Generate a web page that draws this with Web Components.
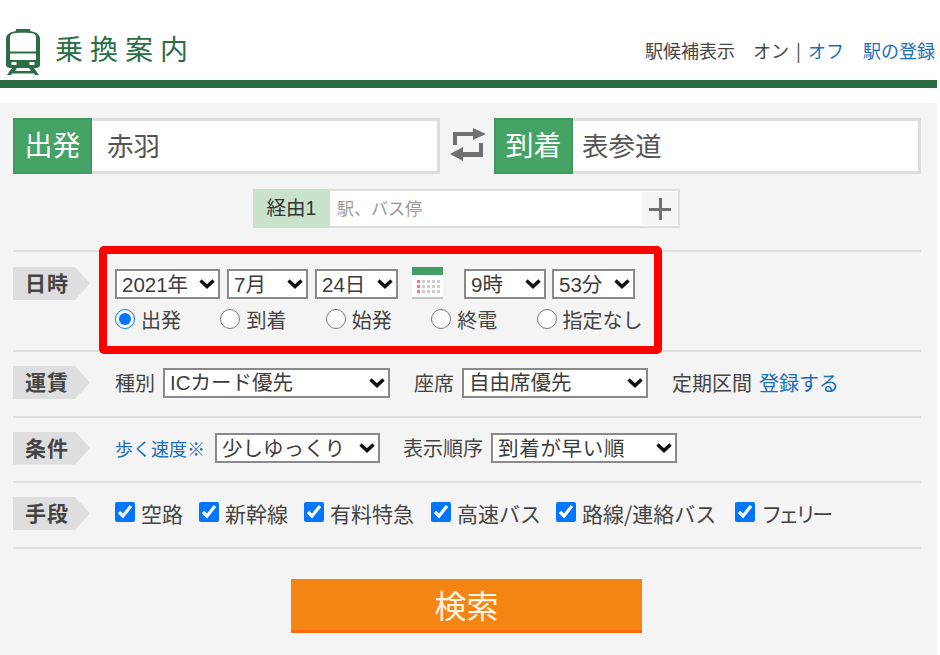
<!DOCTYPE html>
<html lang="ja">
<head>
<meta charset="utf-8">
<title>乗換案内</title>
<style>
  html, body { margin: 0; background: #fff; }
  body { font-family: "Noto Sans CJK JP", "Liberation Sans", sans-serif; color: #333; overflow: hidden; height: 655px; }
</style>
</head>
<body>
<app-header></app-header>
<search-panel>
  <div style="display:flex;align-items:center;height:56px">
    <station-field label="出発" value="赤羽" pad="15"></station-field>
    <swap-icon></swap-icon>
    <station-field label="到着" value="表参道" pad="9"></station-field>
  </div>
  <via-field></via-field>

  <form-row label="日時" first>
    <date-block></date-block>
  </form-row>

  <form-row label="運賃">
    <form-text gap="8">種別</form-text>
    <pick-select w="227" value="ICカード優先"></pick-select>
    <form-text left="24" gap="8">座席</form-text>
    <pick-select w="186" value="自由席優先"></pick-select>
    <form-text left="24" gap="7">定期区間</form-text>
    <form-text link>登録する</form-text>
  </form-row>

  <form-row label="条件">
    <form-text link gap="10" size="18">歩く速度※</form-text>
    <pick-select w="165" value="少しゆっくり"></pick-select>
    <form-text left="23" gap="8">表示順序</form-text>
    <pick-select w="186" value="到着が早い順" spacing="0.7"></pick-select>
  </form-row>

  <form-row label="手段" last>
    <check-item style="margin-right:16px">空路</check-item>
    <check-item style="margin-right:16px">新幹線</check-item>
    <check-item style="margin-right:17px">有料特急</check-item>
    <check-item style="margin-right:15px">高速バス</check-item>
    <check-item style="margin-right:19px">路線/連絡バス</check-item>
    <check-item style="letter-spacing:-4px">フェリー</check-item>
  </form-row>

  <search-button>検索</search-button>
</search-panel>

<script>
class AppHeader extends HTMLElement {
  constructor() {
    super()
    this.attachShadow({mode: 'open'})
    this.shadowRoot.innerHTML = `
      <style>
        :host { display: block; height: 103px; }
        .top { height: 80px; display: flex; align-items: flex-end; box-sizing: border-box; padding: 0 0 5px 5px; width: 940px; }
        svg { display: block; flex: none; }
        h1 { margin: 0 0 9px 14px; font-size: 28px; font-weight: 400; letter-spacing: 7px; color: #2c6e43; line-height: 36px; }
        .tools { margin-left: auto; margin-bottom: 12px; display: flex; font-size: 18px; line-height: 26px; white-space: nowrap; width: 295px; color: #444; }
        .tools span { display: block; }
        a { color: #1a6dbb; text-decoration: none; }
        .bar { height: 8px; width: 937px; background: #2c6b42; }
      </style>
      <div class="top">
        <svg width="36" height="46" viewBox="0 0 36 46">
          <path fill="#2c6e43" fill-rule="evenodd" d="M11 0h14v2c6 1 9 3 10 7v27c0 2-2 3-4 3H5c-2 0-4-1-4-3V9c1-4 4-6 10-7zM7.500 4.500C6 5 5 6.500 5 8v14.500h26V8c0-1.500-1-3-2.500-3.500-3-1-18-1-21 0zM5 24.500V31h26v-6.500zM6.500 33v3h5v-3zM24.500 33v3h5v-3z"/>
          <path fill="#2c6e43" d="M7 39h5l-2 3h16l-2-3h5l5 7h-4l-1-1.500H7L6 46H2z"/>
        </svg>
        <h1>乗換案内</h1>
        <div class="tools">
          <span style="width:108px">駅候補表示</span>
          <span style="width:43px">オン</span>
          <span style="width:12px">|</span>
          <a href="#" style="width:55px">オフ</a>
          <a href="#">駅の登録</a>
        </div>
      </div>
      <div class="bar"></div>`
  }
}

class SearchPanel extends HTMLElement {
  constructor() {
    super()
    this.attachShadow({mode: 'open'})
    this.shadowRoot.innerHTML = `
      <style>
        :host { display: block; width: 937px; height: 552px; box-sizing: border-box; background: #f4f4f4; padding: 15px 16px 0 13px; }
      </style>
      <slot></slot>`
  }
}

class StationField extends HTMLElement {
  constructor() {
    super()
    this.attachShadow({mode: 'open'})
    this.shadowRoot.innerHTML = `
      <style>
        :host { display: flex; width: 427px; height: 56px; box-sizing: border-box; border: 3px solid #ddd; background: #fff; }
        .lab { margin: -3px 0 -3px -3px; width: 79px; flex: none; box-sizing: border-box; border: 2px solid #3f9a5d; background: #44a365; color: #fff; font-size: 28px; text-align: center; line-height: 49px; white-space: nowrap; }
        .val { padding-left: ${this.getAttribute('pad')}px; font-size: 26.500px; line-height: 47px; color: #555; }
      </style>
      <div class="lab">${this.getAttribute('label')}</div>
      <div class="val">${this.getAttribute('value')}</div>`
  }
}

class SwapIcon extends HTMLElement {
  constructor() {
    super()
    this.attachShadow({mode: 'open'})
    this.shadowRoot.innerHTML = `
      <style>
        :host { display: block; width: 54px; flex: none; padding-left: 10px; box-sizing: border-box; margin-top: -3px; }
        svg { display: block; }
      </style>
      <svg width="36" height="33" viewBox="0 0 36 33">
        <path fill="#707070" d="M3 4H23V0L36 6 23 12V8H7v9H3z"/>
        <path fill="#707070" d="M33 15V29H13v4L0 26l13-7v5H29V15z"/>
      </svg>`
  }
}

class ViaField extends HTMLElement {
  constructor() {
    super()
    this.attachShadow({mode: 'open'})
    this.shadowRoot.innerHTML = `
      <style>
        :host { display: flex; width: 427px; height: 39px; margin: 15px 0 22px 240px; box-sizing: border-box; border: 2px solid #ddd; background: #fff; }
        .lab { margin: -2px 0 -2px -2px; width: 77px; flex: none; background: #c8e2cc; font-family: "Liberation Sans", "Noto Sans CJK JP", sans-serif; font-size: 19.500px; line-height: 38px; text-align: center; color: #333; }
        .hint { padding-left: 7px; font-size: 17px; line-height: 34px; color: #999; flex: 1; }
        .plus { width: 35px; background: #f4f4f4; margin: 1px; display: flex; align-items: center; justify-content: center; }
      </style>
      <div class="lab">経由1</div>
      <div class="hint">駅、バス停</div>
      <div class="plus">
        <svg width="22" height="22" viewBox="0 0 22 22"><path fill="#707070" d="M10 0h3v10h9v3h-9v9h-3v-9H0v-3h10z"/></svg>
      </div>`
  }
}

class FormRow extends HTMLElement {
  constructor() {
    super()
    this.attachShadow({mode: 'open'})
    this.shadowRoot.innerHTML = `
      <style>
        :host { display: flex; width: 908px; box-sizing: border-box; height: 65.500px; border-top: 2px solid #e0e0e0; padding-top: 14px; align-items: flex-start; }
        :host([first]) { height: 100px; padding-top: 15px; }
        :host([last]) { height: 67.500px; border-bottom: 2px solid #e0e0e0; }
        .lab { width: 77px; height: 33px; margin-right: 25px; flex: none; background: #dedede; color: #444; font-size: 21px; font-weight: 700; line-height: 31px; box-sizing: border-box; padding-left: 12px; letter-spacing: 1px;
          clip-path: polygon(0 0, 62px 0, 77px 50%, 62px 100%, 0 100%); }
        .body { display: flex; align-items: center; flex: 1; min-height: 33px; }
      </style>
      <div class="lab">${this.getAttribute('label')}</div>
      <div class="body"><slot></slot></div>`
  }
}

class FormText extends HTMLElement {
  connectedCallback() {
    if (this.shadowRoot) return
    this.attachShadow({mode: 'open'})
    const left = this.getAttribute('left') || 0
    const gap = this.getAttribute('gap') || 0
    const size = this.getAttribute('size') || 20
    const inner = this.hasAttribute('link') ? '<a href="#"><slot></slot></a>' : '<slot></slot>'
    this.shadowRoot.innerHTML = `
      <style>
        :host { display: block; margin-left: ${left}px; margin-right: ${gap}px; font-size: ${size}px; line-height: 30px; white-space: nowrap; color: #444; }
        a { color: #1a6dbb; text-decoration: none; }
      </style>
      ${inner}`
  }
}

class PickSelect extends HTMLElement {
  connectedCallback() {
    if (this.shadowRoot) return
    this.attachShadow({mode: 'open'})
    const value = this.getAttribute('value')
    const w = this.getAttribute('w')
    const spacing = this.getAttribute('spacing') || 0
    this.shadowRoot.innerHTML = `
      <style>
        :host { display: block; position: relative; width: ${w}px; height: 30px; flex: none; }
        select { appearance: none; display: block; width: 100%; height: 30px; margin: 0; box-sizing: border-box; border: 2px solid #8a8a8a; border-radius: 0; background: #fff; padding: 0 0 0 5px; font: 20.500px "Liberation Sans", "Noto Sans CJK JP", sans-serif; letter-spacing: ${spacing}px; color: #3c3c3c; outline: none; }
        svg { position: absolute; right: 5px; top: 10px; pointer-events: none; }
      </style>
      <select><option>${value}</option></select>
      <svg width="16" height="10" viewBox="0 0 16 10"><path fill="none" stroke="#111" stroke-width="3.500" d="M1.500 1.500l6.500 6 6.500-6"/></svg>`
  }
}

class DateBlock extends HTMLElement {
  constructor() {
    super()
    this.attachShadow({mode: 'open'})
    const radios = ['出発', '到着', '始発', '終電', '指定なし']
      .map((t, i) => `<label><input type="radio" name="kind" ${i == 0 ? 'checked' : ''}>${t}</label>`).join('')
    this.shadowRoot.innerHTML = `
      <style>
        :host { display: block; position: relative; margin-top: 2px; font-size: 20px; color: #444; }
        .dates { display: flex; align-items: flex-start; height: 35px; }
        .dates pick-select { margin-right: 7px; }
        .cal { margin: -2px 21px 0 7px; display: block; flex: none; }
        .radios { display: grid; grid-template-columns: repeat(4, 105.400px) auto; width: 530px; height: 30px; }
        label { display: flex; align-items: center; white-space: nowrap; line-height: 30px; padding-top: 1px; }
        input { width: 20px; height: 20px; margin: 0 6px 3px 0; flex: none; }
        .mark { position: absolute; left: -16px; top: -23px; width: 563px; height: 108px; box-sizing: border-box; border: 8px solid #f00; border-radius: 5px; pointer-events: none; }
      </style>
      <div class="dates">
        <pick-select w="105" value="2021年"></pick-select>
        <pick-select w="81" value="7月"></pick-select>
        <pick-select w="83" value="24日"></pick-select>
        <svg class="cal" width="31" height="32" viewBox="0 0 31 32">
          <rect x="0" y="0" width="31" height="32" fill="#fff"/>
          <rect x="0" y="30" width="31" height="2" fill="#c4c4c4"/>
          <rect x="0" y="0" width="31" height="8" fill="#43a065"/>
          <g fill="#ccc">
            <path d="M10 13h3v3h-3zM15 13h3v3h-3zM20 13h3v3h-3zM25 13h3v3h-3z"/>
            <path d="M10 18h3v3h-3zM15 18h3v3h-3zM20 18h3v3h-3zM25 18h3v3h-3z"/>
            <path d="M10 23h3v3h-3zM15 23h3v3h-3zM20 23h3v3h-3zM25 23h3v3h-3z"/>
          </g>
          <path fill="#f77" d="M5 13h3v3H5zM5 18h3v3H5zM5 23h3v3H5z"/>
        </svg>
        <pick-select w="82" value="9時" style="margin-right:6px"></pick-select>
        <pick-select w="83" value="53分"></pick-select>
      </div>
      <div class="radios">${radios}</div>
      <div class="mark"></div>`
  }
}

class CheckItem extends HTMLElement {
  constructor() {
    super()
    this.attachShadow({mode: 'open'})
    this.shadowRoot.innerHTML = `
      <style>
        :host { display: block; font-size: 21px; color: #444; line-height: 30px; white-space: nowrap; margin-bottom: 1px; }
        label { display: flex; align-items: center; }
        input { width: 20px; height: 20px; margin: 0 6px 2px 0; flex: none; }
      </style>
      <label><input type="checkbox" checked><slot></slot></label>`
  }
}

class SearchButton extends HTMLElement {
  constructor() {
    super()
    this.attachShadow({mode: 'open'})
    this.shadowRoot.innerHTML = `
      <style>
        :host { display: block; width: 351px; margin: 30px 0 0 278px; }
        button { display: block; width: 100%; height: 54px; padding: 0; border: 0; border-bottom: 3px solid #ff6a0a; background: #f48512; color: #fff5e6; font: 32px "Noto Sans CJK JP", sans-serif; }
      </style>
      <button><slot></slot></button>`
  }
}

customElements.define('app-header', AppHeader)
customElements.define('search-panel', SearchPanel)
customElements.define('station-field', StationField)
customElements.define('swap-icon', SwapIcon)
customElements.define('via-field', ViaField)
customElements.define('form-row', FormRow)
customElements.define('form-text', FormText)
customElements.define('pick-select', PickSelect)
customElements.define('date-block', DateBlock)
customElements.define('check-item', CheckItem)
customElements.define('search-button', SearchButton)
</script>
</body>
</html>
